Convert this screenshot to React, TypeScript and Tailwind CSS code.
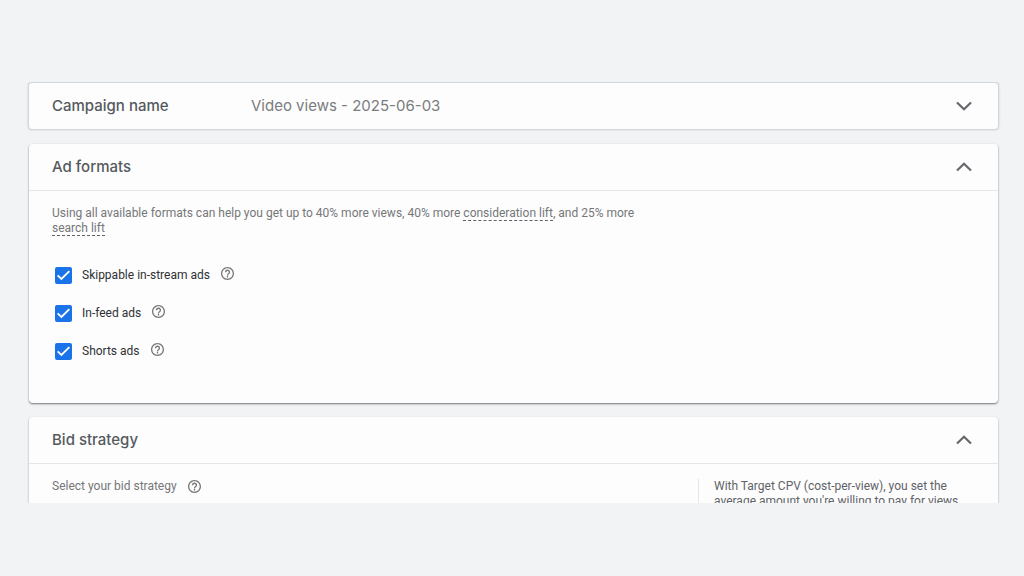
import { useState, type ReactNode } from 'react';
import clsx from 'clsx';

const AD_FORMATS = ['Skippable in-stream ads', 'In-feed ads', 'Shorts ads'];

function Chevron({ open }: { open: boolean }) {
  return (
    <svg
      viewBox="0 0 16 10"
      className={clsx('h-2.5 w-4 shrink-0', open && 'rotate-180')}
      fill="none"
      stroke="#65686c"
      strokeWidth="2.2"
      aria-hidden="true"
    >
      <path d="M1 1.5 8 8.3 15 1.5" />
    </svg>
  );
}

function HelpButton({ label }: { label: string }) {
  return (
    <button type="button" aria-label={label} className="shrink-0">
      <svg viewBox="2 2 20 20" className="size-[13px]" fill="#757575" aria-hidden="true">
        <path d="M11 18h2v-2h-2v2zm1-16C6.48 2 2 6.48 2 12s4.48 10 10 10 10-4.48 10-10S17.52 2 12 2zm0 18c-4.41 0-8-3.59-8-8s3.59-8 8-8 8 3.59 8 8-3.59 8-8 8zm0-14c-2.21 0-4 1.79-4 4h2c0-1.1.9-2 2-2s2 .9 2 2c0 2-3 1.75-3 5h2c0-2.25 3-2.5 3-5 0-2.21-1.79-4-4-4z" />
      </svg>
    </button>
  );
}

interface PanelHeaderProps {
  title: string;
  value?: string;
  open: boolean;
}

function PanelHeader({ title, value, open }: PanelHeaderProps) {
  return (
    <button
      type="button"
      aria-expanded={open}
      className="flex h-[46px] w-full items-center pr-[26px] pl-[23px] text-left font-[Inter,sans-serif] text-[15px] leading-5"
    >
      <span className="w-[199px] font-medium text-[#55595e]">{title}</span>
      <span className="flex-1 text-[#7a7c7e]">{value}</span>
      <Chevron open={open} />
    </button>
  );
}

function HintLink({ children }: { children: ReactNode }) {
  return (
    <a href="#" className="border-b border-dashed border-[#5f6368]">
      {children}
    </a>
  );
}

function FormatOption({ label }: { label: string }) {
  const [checked, setChecked] = useState(true);

  return (
    <li className="flex h-[17px] items-center">
      <label className="flex items-center gap-2.5">
        <span className="grid size-[17px]">
          <input
            type="checkbox"
            checked={checked}
            onChange={(e) => setChecked(e.target.checked)}
            className="col-start-1 row-start-1 size-[17px] appearance-none rounded-xs border-2 border-[#5f6368] checked:border-[#1a73e8] checked:bg-[#1a73e8]"
          />
          {checked && (
            <svg
              viewBox="0 0 18 18"
              className="pointer-events-none col-start-1 row-start-1 size-[17px]"
              fill="none"
              stroke="#fff"
              strokeWidth="2"
              aria-hidden="true"
            >
              <path d="M2.8 8.8 6.8 12.6 15.2 4.4" />
            </svg>
          )}
        </span>
        <span className="text-[#2f3134]">{label}</span>
      </label>
      <span className="ml-[11px] flex pb-1">
        <HelpButton label={`About ${label}`} />
      </span>
    </li>
  );
}

export default function App() {
  return (
    <div className="min-h-screen bg-[#f1f3f5] pt-[82px] font-[Roboto,sans-serif] text-xs leading-[15px]">
      <main className="flex flex-col overflow-hidden pr-[25px] pl-7">
        <section className="rounded-sm border border-[#d3d6da] bg-[#fdfdfd] shadow-[0_0_2px_#c4c7cb]">
          <PanelHeader title="Campaign name" value="Video views - 2025-06-03" open={false} />
        </section>

        <section className="mx-px mt-[14px] rounded-sm bg-[#fdfdfd] shadow-[0_1px_2px_rgba(60,64,67,0.7)]">
          <PanelHeader title="Ad formats" open />
          <div className="border-t border-[#e4e6e8] px-[23px] pt-[15px] pb-[43px]">
            <p className="max-w-[600px] text-[#757779]">
              Using all available formats can help you get up to 40% more views, 40% more{' '}
              <HintLink>consideration lift</HintLink>, and 25% more <HintLink>search lift</HintLink>
            </p>
            <ul className="mt-[31px] flex flex-col gap-[21px] pl-[3px]">
              {AD_FORMATS.map((label) => (
                <FormatOption key={label} label={label} />
              ))}
            </ul>
          </div>
        </section>

        <section className="mx-px mt-[14px] rounded-t-sm bg-[#fdfdfd] shadow-[0_1px_2px_rgba(60,64,67,0.5)]">
          <PanelHeader title="Bid strategy" open />
          {/* Body is cut off by the fold */}
          <div className="flex h-10 items-start justify-between overflow-hidden border-t border-[#e4e6e8] pt-[15px]">
            <div className="flex items-center gap-[11px] pl-[23px] text-[#757779]">
              <span>Select your bid strategy</span>
              <HelpButton label="About bid strategy" />
            </div>
            <p className="w-[300px] border-l border-[#e4e6e8] pr-9 pl-[15px] text-[#5f6368]">
              With Target CPV (cost-per-view), you set the average amount you're willing to pay for views
            </p>
          </div>
        </section>
      </main>
    </div>
  );
}
